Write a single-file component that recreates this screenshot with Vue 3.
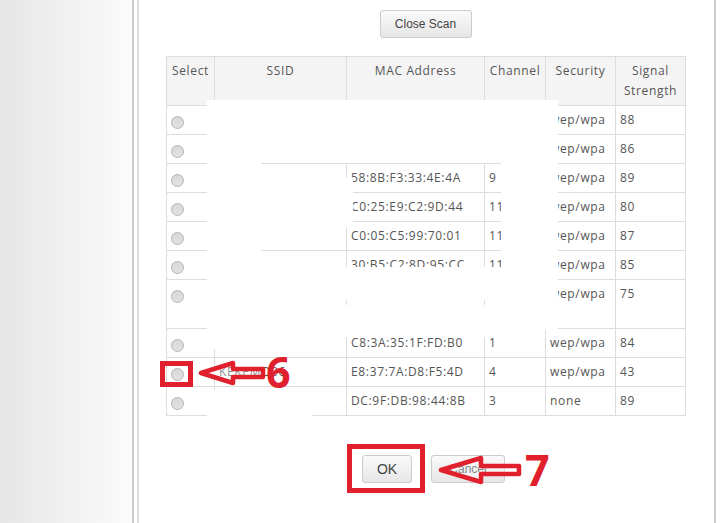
<template>
    <div class="page">
        <div class="sidebar"></div>
        <div class="main">
            <div class="close-row"><button class="btn close-btn">Close Scan</button></div>
            <table class="scan-table">
                <colgroup>
                    <col v-for="w in colWidths" :key="w.name" :style="{ width: w.px + 'px' }">
                </colgroup>
                <thead>
                    <tr>
                        <th>Select</th>
                        <th>SSID</th>
                        <th>MAC Address</th>
                        <th>Channel</th>
                        <th>Security</th>
                        <th>Signal<br>Strength</th>
                    </tr>
                </thead>
                <tbody>
                    <tr v-for="(row, i) in rows" :key="i" :class="{ tall: row.tall }">
                        <td class="radio-cell"><input type="radio" name="ap" class="radio"></td>
                        <td>{{ row.ssid }}</td>
                        <td>{{ row.mac }}</td>
                        <td>{{ row.channel }}</td>
                        <td>{{ row.security }}</td>
                        <td>{{ row.signal }}</td>
                    </tr>
                </tbody>
            </table>
            <div class="actions">
                <button class="btn ok-btn">OK</button>
                <button class="btn cancel-btn">Cancel</button>
            </div>
        </div>

        <!-- white boxes painted over the private network names -->
        <div class="patch p-top"></div>
        <div class="patch p-left"></div>
        <div class="patch p-mid"></div>
        <div class="patch p-right"></div>
        <div class="patch p-low1"></div>
        <div class="patch p-low2"></div>
        <div class="patch p-bottom"></div>

        <!-- red annotations -->
        <div class="mark mark-radio"></div>
        <div class="mark mark-ok"></div>
        <svg class="arrow arrow-6" width="70" height="26" viewBox="0 0 70 26">
            <path d="M4 13 L36 3 L36 9 L66 9 L66 17 L36 17 L36 23 Z" fill="rgba(255,255,255,0.35)" stroke="#e0202c" stroke-width="4.5" stroke-linejoin="round"/>
        </svg>
        <svg class="arrow arrow-7" width="86" height="30" viewBox="0 0 86 30">
            <path d="M4 15 L44 3 L44 11 L82 11 L82 19 L44 19 L44 27 Z" fill="rgba(255,255,255,0.35)" stroke="#e0202c" stroke-width="4.5" stroke-linejoin="round"/>
        </svg>
        <span class="num num-6">6</span>
        <span class="num num-7">7</span>
    </div>
</template>

<script setup>
const colWidths = [
    { name: 'select', px: 48 },
    { name: 'ssid', px: 132 },
    { name: 'mac', px: 138 },
    { name: 'channel', px: 61 },
    { name: 'security', px: 70 },
    { name: 'signal', px: 70 },
]

const rows = [
    { ssid: '', mac: '', channel: '', security: 'wep/wpa', signal: '88' },
    { ssid: '', mac: '', channel: '', security: 'wep/wpa', signal: '86' },
    { ssid: '', mac: '58:8B:F3:33:4E:4A', channel: '9', security: 'wep/wpa', signal: '89' },
    { ssid: '', mac: 'C0:25:E9:C2:9D:44', channel: '11', security: 'wep/wpa', signal: '80' },
    { ssid: '', mac: 'C0:05:C5:99:70:01', channel: '11', security: 'wep/wpa', signal: '87' },
    { ssid: '', mac: '30:B5:C2:8D:95:CC', channel: '11', security: 'wep/wpa', signal: '85' },
    { ssid: '', mac: '', channel: '', security: 'wep/wpa', signal: '75', tall: true },
    { ssid: '', mac: 'C8:3A:35:1F:FD:B0', channel: '1', security: 'wep/wpa', signal: '84' },
    { ssid: 'KEKEMO06', mac: 'E8:37:7A:D8:F5:4D', channel: '4', security: 'wep/wpa', signal: '43' },
    { ssid: '', mac: 'DC:9F:DB:98:44:8B', channel: '3', security: 'none', signal: '89' },
]
</script>

<style>
html, body {
    margin: 0;
    background: #fff;
    overflow: hidden;
}
</style>

<style scoped>
.page {
    position: relative;
    display: flex;
    width: 723px;
    height: 523px;
    overflow: hidden;
    background: #fff;
    font-family: "Open Sans", sans-serif;
    color: #555;
}
.sidebar {
    width: 132px;
    flex: none;
    background: linear-gradient(to right, #e6e6e6, #fbfbfb);
    border-right: 2px solid #ccc;
}
.main {
    width: 575px;
    margin-left: 3px;
    flex: none;
    border-left: 2px solid #ddd;
    border-right: 2px solid #ccc;
    box-sizing: content-box;
}
.close-row {
    display: flex;
    justify-content: center;
    padding-top: 10px;
    padding-right: 2px;
    margin-bottom: 18px;
}
.btn {
    height: 28px;
    padding: 0;
    border: 1px solid #ccc;
    border-radius: 3px;
    background: linear-gradient(#fafafa, #e6e6e6);
    font-family: "Liberation Sans", sans-serif;
    font-size: 12px;
    color: #444;
}
.close-btn {
    width: 92px;
}
.scan-table {
    border-collapse: collapse;
    table-layout: fixed;
    width: 520px;
    margin-left: 27px;
    font-size: 12px;
    letter-spacing: 0.65px;
}
.scan-table th, .scan-table td {
    border: 1px solid #ddd;
    padding: 4px 3px 0 4px;
    line-height: 20px;
    vertical-align: top;
    overflow: hidden;
    white-space: nowrap;
}
.scan-table th {
    height: 44px;
    background: #f4f4f4;
    font-weight: 400;
    text-align: center;
    padding-left: 0;
    padding-right: 0;
}
.scan-table tbody tr {
    height: 29px;
}
.scan-table tbody tr.tall {
    height: 49px;
}
.radio-cell {
    text-align: center;
}
.radio {
    appearance: none;
    display: block;
    width: 13px;
    height: 13px;
    margin: 6px 0 0 0;
    border: 1px solid #b4b4b4;
    border-radius: 50%;
    background: linear-gradient(#d8d8d8, #e2e2e2);
    box-sizing: border-box;
}
.actions {
    display: flex;
    justify-content: center;
    gap: 19px;
    margin-top: 39px;
    padding-left: 14px;
}
.ok-btn {
    width: 50px;
    font-size: 14px;
}
.cancel-btn {
    width: 74px;
}
.patch {
    position: absolute;
    background: #fff;
}
.p-top { left: 207px; top: 100px; width: 351px; height: 63px; }
.p-left { left: 207px; top: 163px; width: 54px; height: 186px; }
.p-mid { left: 261px; top: 178px; width: 92px; height: 49px; }
.p-right { left: 501px; top: 163px; width: 57px; height: 167px; }
.p-low1 { left: 261px; top: 267px; width: 240px; height: 33px; }
.p-low2 { left: 261px; top: 305px; width: 284px; height: 32px; }
.p-bottom { left: 207px; top: 390px; width: 105px; height: 27px; }
.mark {
    position: absolute;
    border: 5px solid #e0202c;
    box-sizing: border-box;
}
.mark-radio { left: 160px; top: 361px; width: 33px; height: 26px; }
.mark-ok { left: 347px; top: 444px; width: 78px; height: 49px; }
.arrow {
    position: absolute;
}
.arrow-6 { left: 197px; top: 360px; }
.arrow-7 { left: 437px; top: 455px; }
.num {
    position: absolute;
    font-family: "Open Sans", sans-serif;
    font-weight: 700;
    color: #e0202c;
    line-height: 1;
}
.num-6 { left: 266px; top: 350px; font-size: 43px; }
.num-7 { left: 525px; top: 448px; font-size: 43px; }
</style>
